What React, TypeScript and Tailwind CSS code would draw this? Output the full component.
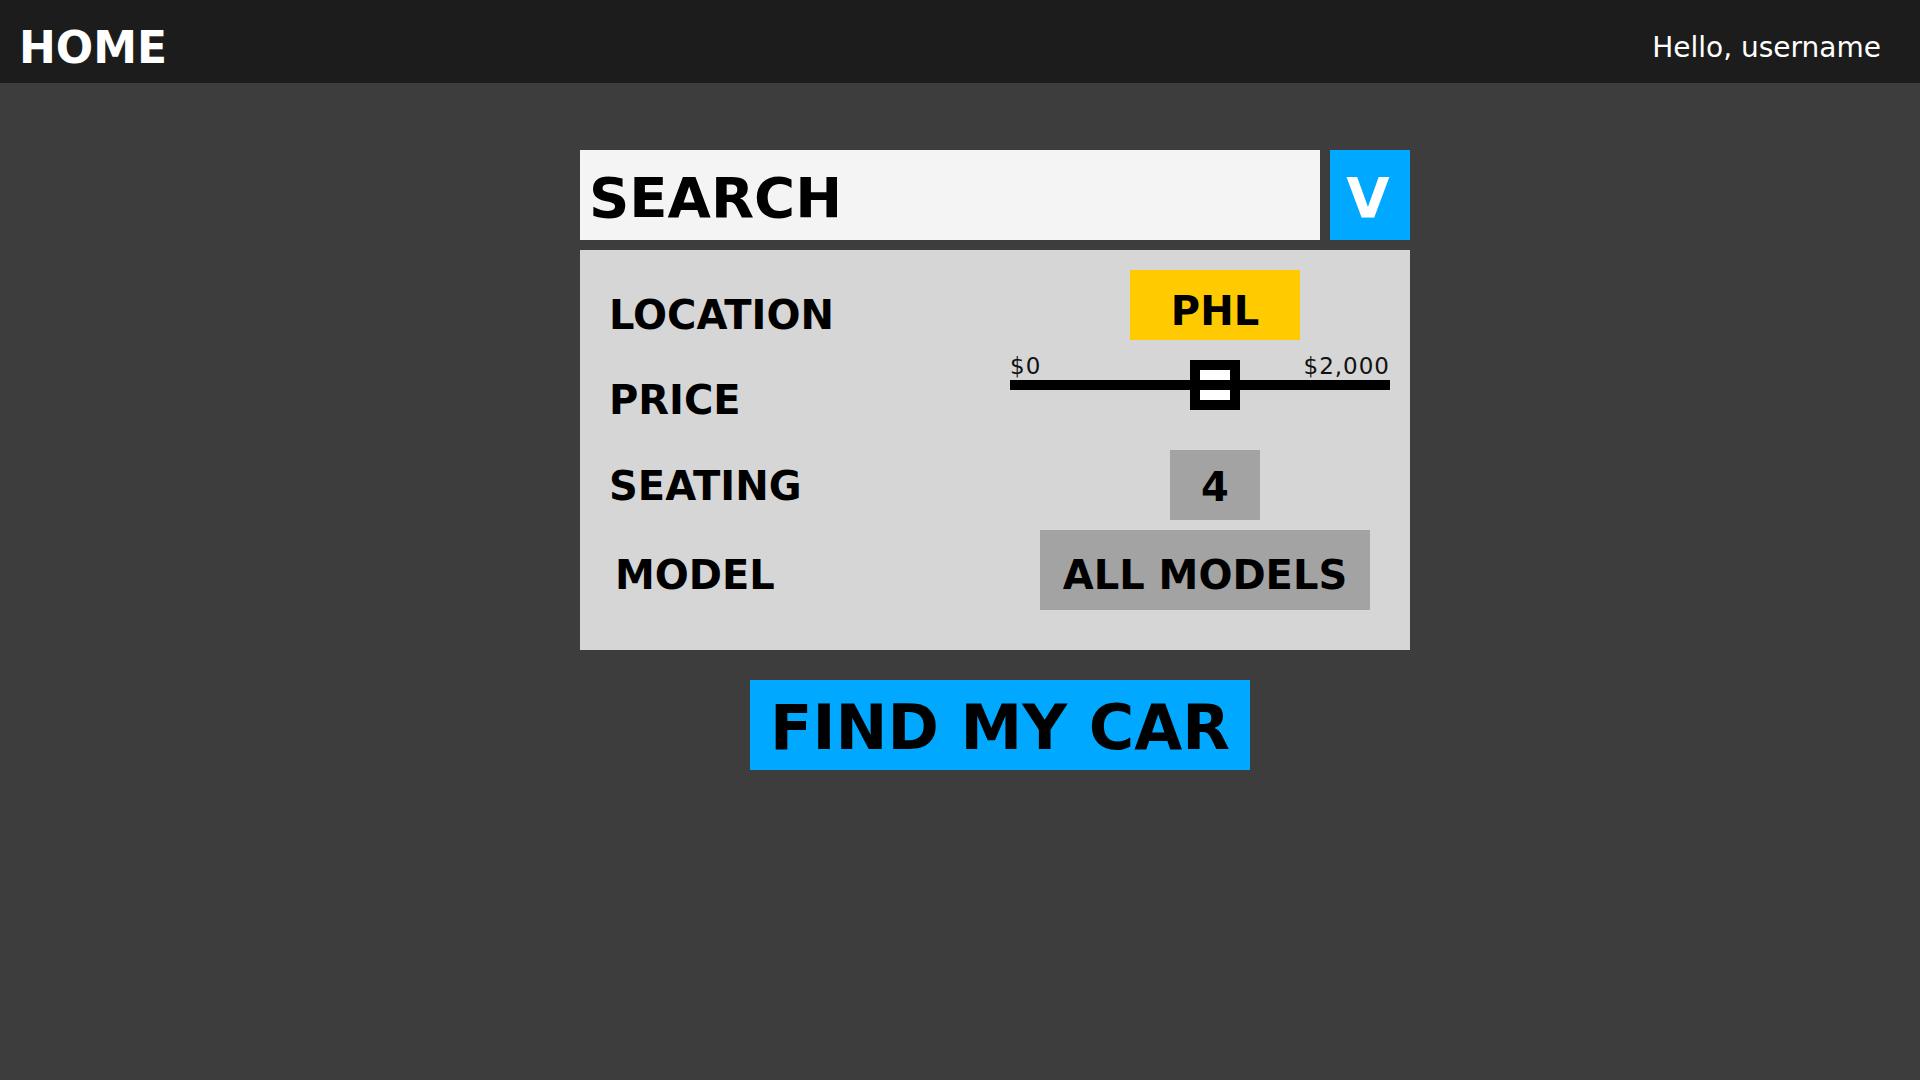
import React from 'react';

const font = "font-['DejaVu_Sans',sans-serif]";

const PriceSlider: React.FC = () => (
    <div className="relative w-[380px] mt-[15px]">
        <div className="flex justify-between text-[23px] leading-none font-normal tracking-[1px] text-[#111]">
            <span>$0</span>
            <span>$2,000</span>
        </div>
        <div className="mt-[2px] h-[10px] bg-black" />
        {/* thumb sits over the track */}
        <div className="absolute left-[180px] top-[5px] w-[50px] h-[50px] border-[10px] border-black bg-white">
            <div className="mt-[10px] h-[10px] bg-black" />
        </div>
    </div>
);

export default function App() {
    return (
        <div className={`min-h-[1080px] bg-[#3d3d3d] ${font}`}>
            <header className="h-[83px] bg-[#1c1c1c] flex items-center justify-between pl-[19px] pr-[39px]">
                <span className="pt-[12px] text-[44px] leading-none font-bold text-white">HOME</span>
                <span className="pt-[12px] text-[28px] leading-none text-white">Hello, username</span>
            </header>

            <main className="ml-[580px] mt-[67px] w-[830px] flex flex-col">
                <div className="flex gap-[10px] h-[90px]">
                    <div className="flex-1 bg-[#f4f4f4] flex items-center pl-[9px] pt-[6px]">
                        <span className="text-[56px] leading-none font-bold text-black">SEARCH</span>
                    </div>
                    <button className="w-[80px] bg-[#00a8ff] flex items-center justify-center pt-[6px] pr-[4px] text-[56px] leading-none font-bold text-white">
                        V
                    </button>
                </div>

                <section className="mt-[10px] bg-[#d6d6d6] flex flex-col pl-[29px] pt-[20px] pb-[40px] text-black font-bold">
                    <div className="flex h-[70px]">
                        <div className="w-[401px] mt-[25px] text-[40px] leading-none">LOCATION</div>
                        <div className="ml-[120px] w-[170px] h-[70px] bg-[#ffcb00] pt-[21px] text-center text-[40px] leading-none">
                            PHL
                        </div>
                    </div>

                    <div className="flex h-[110px]">
                        <div className="w-[401px] mt-[40px] text-[40px] leading-none">PRICE</div>
                        <PriceSlider />
                    </div>

                    <div className="flex h-[70px]">
                        <div className="w-[401px] mt-[16px] text-[40px] leading-none">SEATING</div>
                        <div className="ml-[160px] w-[90px] h-[70px] bg-[#a3a3a3] pt-[17px] text-center text-[40px] leading-none">
                            4
                        </div>
                    </div>

                    <div className="flex h-[80px] mt-[10px]">
                        <div className="w-[401px] mt-[25px] pl-[6px] text-[40px] leading-none">MODEL</div>
                        <div className="ml-[30px] w-[330px] h-[80px] bg-[#a3a3a3] pt-[25px] text-center text-[40px] leading-none">
                            ALL MODELS
                        </div>
                    </div>
                </section>

                <button className="mt-[30px] ml-[170px] w-[500px] h-[90px] bg-[#00a8ff] flex items-center justify-center pt-[6px] text-[62px] leading-none font-bold text-black">
                    FIND MY CAR
                </button>
            </main>
        </div>
    );
}
